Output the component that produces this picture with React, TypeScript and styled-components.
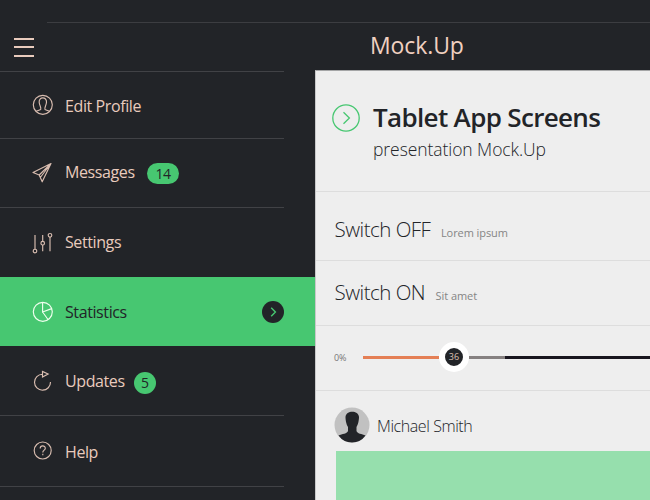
import React from 'react';
import styled, { createGlobalStyle } from 'styled-components';

const ink = '#222428';
const blush = '#e9cbbd';
const green = '#47c771';

const GlobalStyle = createGlobalStyle`
  * { box-sizing: border-box; }
  body { margin: 0; overflow: hidden; font-family: "Open Sans", "Noto Sans", sans-serif; }
  svg { display: block; overflow: visible; }
`;

const Screen = styled.div`
  width: 650px;
  height: 500px;
  overflow: hidden;
  background: ${ink};
`;

const TopStrip = styled.div`
  height: 23px;
  margin-left: 47px;
  border-bottom: 1px solid #3c3d41;
`;

const Columns = styled.div`
  display: flex;
  height: 477px;
`;

const Sidebar = styled.aside`
  width: 315px;
  flex: none;
`;

const MenuBar = styled.div`
  height: 49px;
  width: 284px;
  border-bottom: 1px solid #414246;
`;

const MenuButton = styled.button`
  display: flex;
  flex-direction: column;
  gap: 6.4px;
  padding: 15px 0 0 14px;
  border: 0;
  background: none;
`;

const MenuLine = styled.span`
  width: 20px;
  height: 2px;
  background: ${blush};
`;

const NavRow = styled.div<{ $height: number; $active?: boolean }>`
  height: ${p => p.$height}px;
  padding-right: 31px;
  color: ${p => (p.$active ? ink : blush)};
  background: ${p => (p.$active ? green : 'transparent')};
`;

const NavLink = styled.div<{ $line?: boolean; $shift: number }>`
  height: 100%;
  display: flex;
  align-items: center;
  padding: ${p => p.$shift}px 0 0 32px;
  border-bottom: ${p => (p.$line ? '1px solid #414246' : '0')};
`;

const NavIcon = styled.svg<{ $drop?: number; $light?: boolean }>`
  width: 22px;
  height: 22px;
  flex: none;
  margin: ${p => p.$drop ?? 0}px 11px 0 0;
  fill: none;
  stroke: ${p => (p.$light ? '#efffee' : '#d9bdb0')};
  stroke-width: 1.15;
`;

const NavLabel = styled.span<{ $raise?: number }>`
  margin-bottom: ${p => p.$raise ?? 2}px;
  font-size: 16px;
  line-height: 20px;
  letter-spacing: -0.4px;
`;

const Badge = styled.span<{ $wide?: boolean }>`
  width: ${p => (p.$wide ? 32 : 22)}px;
  height: ${p => (p.$wide ? 21 : 22)}px;
  margin: ${p => (p.$wide ? 1 : 3)}px 0 0 ${p => (p.$wide ? 12.5 : 9)}px;
  border-radius: 11px;
  background: ${green};
  color: ${ink};
  font-size: 14px;
  line-height: 21px;
  letter-spacing: -0.5px;
  text-align: center;
`;

const ActiveArrow = styled.svg`
  width: 22px;
  height: 22px;
  margin-left: auto;
  fill: none;
`;

const Main = styled.main`
  flex: 1;
  min-width: 0;
  display: flex;
  flex-direction: column;
`;

const AppTitle = styled.header`
  height: 47px;
  flex: none;
  padding: 6px 0 0 55px;
  color: #f0d0c0;
  font-size: 23px;
  line-height: 32px;
  letter-spacing: -0.1px;
`;

const Panel = styled.section`
  flex: 1;
  min-height: 0;
  overflow: hidden;
  background: #eeeeee;
  border-top: 1px solid #a4a5a6;
  border-left: 1px solid #c8c8c9;
  color: ${ink};
`;

const PanelRow = styled.div<{ $height: number; $top?: number }>`
  height: ${p => p.$height}px;
  padding: ${p => p.$top ?? 0}px 0 0 18px;
  display: flex;
  border-bottom: 1px solid #dddddd;
`;

const HeadingIcon = styled.svg`
  width: 28px;
  height: 28px;
  flex: none;
  margin: 4px 12px 0 -2px;
  fill: none;
  stroke: ${green};
  stroke-width: 1.3;
`;

const Heading = styled.h1`
  margin: 0 0 0 1px;
  font-size: 26px;
  font-weight: 600;
  line-height: 34px;
  letter-spacing: -0.66px;
  white-space: nowrap;
`;

const SubHeading = styled.p`
  margin: 2px 0 0 1px;
  font-size: 17.5px;
  font-weight: 300;
  line-height: 26px;
  letter-spacing: -0.07px;
`;

const SwitchRow = styled(PanelRow)`
  align-items: baseline;
`;

const SwitchLabel = styled.span`
  margin-left: 0.5px;
  font-size: 20.5px;
  font-weight: 300;
  line-height: 28px;
  letter-spacing: -0.5px;
`;

const SwitchHint = styled.span`
  margin-left: 10.5px;
  color: #858585;
  font-size: 11px;
  letter-spacing: -0.07px;
`;

const SliderRow = styled(PanelRow)`
  align-items: center;
  padding-bottom: 2px;
`;

const SliderMin = styled.span`
  width: 29px;
  color: #777777;
  font-size: 9px;
  letter-spacing: -0.2px;
`;

const Track = styled.div<{ $width?: number; $color: string }>`
  height: 3px;
  flex: ${p => (p.$width ? `0 0 ${p.$width}px` : '1')};
  background: ${p => p.$color};
`;

const Thumb = styled.div`
  width: 30px;
  height: 30px;
  flex: none;
  border: 6px solid #ffffff;
  border-radius: 50%;
  background: ${ink};
  color: #dfc0b2;
  font-size: 9px;
  line-height: 18px;
  text-align: center;
`;

const Person = styled.div`
  display: flex;
  align-items: center;
  height: 60px;
  padding: 8px 0 0 18px;
`;

const Avatar = styled.svg`
  width: 36px;
  height: 36px;
  margin-right: 7px;
`;

const PersonName = styled.span`
  margin-top: 1px;
  font-size: 16px;
  font-weight: 300;
  letter-spacing: -0.42px;
`;

const Picture = styled.div`
  height: 60px;
  margin-left: 20px;
  background: #96dfad;
`;

export default function App() {
  return (
    <Screen>
      <GlobalStyle />
      <TopStrip />
      <Columns>
        <Sidebar>
          <MenuBar>
            <MenuButton aria-label="Menu"><MenuLine /><MenuLine /><MenuLine /></MenuButton>
          </MenuBar>
          <NavRow $height={67}>
            <NavLink $line $shift={0}>
              <NavIcon viewBox="0 0 22 22">
                <circle cx="10.8" cy="10.8" r="9.5" />
                <path d="M4 17.2Q7.5 16 8.7 15.5C9.6 14 7.4 11.3 7.2 8.5C6.4 2.4 15 2.4 14.5 8.3C14.2 11.7 12.1 14 13 15.5Q14.1 16 17.7 17.2" />
              </NavIcon>
              <NavLabel $raise={-2}>Edit Profile</NavLabel>
            </NavLink>
          </NavRow>
          <NavRow $height={69}>
            <NavLink $line $shift={0}>
              <NavIcon viewBox="0 0 22 22">
                <path d="M19 1.5L1 10.5L7.2 13L10.2 19.8L19 1.5L7.2 13L8.3 15.5L19 1.5" strokeLinejoin="round" />
              </NavIcon>
              <NavLabel>Messages</NavLabel>
              <Badge $wide>14</Badge>
            </NavLink>
          </NavRow>
          <NavRow $height={69}>
            <NavLink $shift={0}>
              <NavIcon viewBox="0 0 22 22" $drop={2}>
                <path d="M3 2V16.2M10.7 2V8.3M10.7 12V18.3M18 4V18.3" />
                <circle cx="3" cy="18" r="1.8" />
                <circle cx="10.7" cy="10.2" r="1.8" />
                <circle cx="18" cy="2.3" r="1.8" />
              </NavIcon>
              <NavLabel>Settings</NavLabel>
            </NavLink>
          </NavRow>
          <NavRow $height={69} $active>
            <NavLink $shift={0}>
              <NavIcon viewBox="0 0 22 22" $light>
                <circle cx="10.8" cy="10.8" r="9.5" />
                <path d="M10.6 1.3V11L19.7 7.6M10.6 11L16 18.5" />
              </NavIcon>
              <NavLabel $raise={0}>Statistics</NavLabel>
              <ActiveArrow viewBox="0 0 22 22">
                <circle cx="11" cy="11" r="11" fill={ink} />
                <path d="M9.2 6.8L13.4 11L9.2 15.2" stroke={green} strokeWidth="1.4" />
              </ActiveArrow>
            </NavLink>
          </NavRow>
          <NavRow $height={70}>
            <NavLink $line $shift={2}>
              <NavIcon viewBox="0 0 22 22">
                <path d="M10.5 3.2A8 8 0 1 0 18.5 11M10.5 0.5V6L16.1 3.1Z" />
              </NavIcon>
              <NavLabel>Updates</NavLabel>
              <Badge>5</Badge>
            </NavLink>
          </NavRow>
          <NavRow $height={71}>
            <NavLink $line $shift={2}>
              <NavIcon viewBox="0 0 22 22">
                <circle cx="10.7" cy="9.5" r="8.5" />
                <path d="M8.2 7.5C8.2 4 13.3 4.2 13.3 7.2C13.3 9.2 10.8 9 10.8 11.5M10.8 12.8V14.2" />
              </NavIcon>
              <NavLabel $raise={0}>Help</NavLabel>
            </NavLink>
          </NavRow>
        </Sidebar>
        <Main>
          <AppTitle>Mock.Up</AppTitle>
          <Panel>
            <PanelRow $height={121} $top={29}>
              <HeadingIcon viewBox="0 0 28 28">
                <circle cx="14" cy="14" r="13.2" />
                <path d="M11.5 8.2L17.4 14L11.5 19.8" />
              </HeadingIcon>
              <div>
                <Heading>Tablet App Screens</Heading>
                <SubHeading>presentation Mock.Up</SubHeading>
              </div>
            </PanelRow>
            <SwitchRow $height={69} $top={23}>
              <SwitchLabel>Switch OFF</SwitchLabel>
              <SwitchHint>Lorem ipsum</SwitchHint>
            </SwitchRow>
            <SwitchRow $height={65} $top={17}>
              <SwitchLabel>Switch ON</SwitchLabel>
              <SwitchHint>Sit amet</SwitchHint>
            </SwitchRow>
            <SliderRow $height={65}>
              <SliderMin>0%</SliderMin>
              <Track $width={76} $color="#e47f55" />
              <Thumb>36</Thumb>
              <Track $width={36} $color="#858080" />
              <Track $color="#18151e" />
            </SliderRow>
            <Person>
              <Avatar viewBox="0 0 36 36">
                <circle cx="18" cy="18" r="17.5" fill="#c1c1c1" />
                <path d="M4.5 28.5C8 27 13.5 26.5 14 24V20C12 17 11.5 12 11.5 10C12 3 24.5 3 25 10C25 13 24 18 22.5 20V24C23 26.5 28 27 31.5 28.5Q26.5 35.5 18 35.5Q9.5 35.5 4.5 28.5Z" fill={ink} />
              </Avatar>
              <PersonName>Michael Smith</PersonName>
            </Person>
            <Picture />
          </Panel>
        </Main>
      </Columns>
    </Screen>
  );
}
